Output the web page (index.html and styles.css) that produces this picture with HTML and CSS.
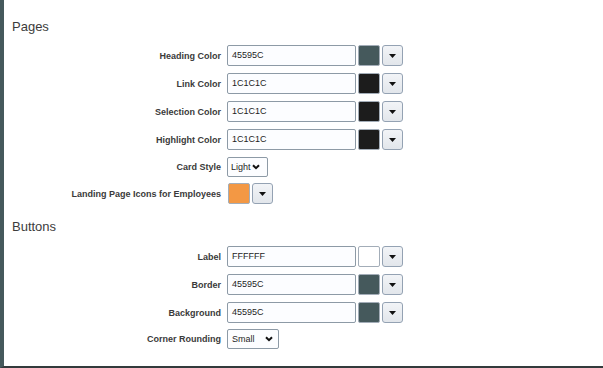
FILE: index.html
```html
<!DOCTYPE html>
<html>
<head>
<meta charset="utf-8">
<link rel="stylesheet" href="styles.css">
</head>
<body>
<div class="panel">
  <h2 class="section-title first">Pages</h2>
  <div class="rows">
    <div class="row">
      <label class="lbl">Heading Color</label>
      <div class="ctl"><span class="hex">45595C</span><span class="swatch" style="background:#45595C"></span><span class="dd"><svg width="7" height="4" viewBox="0 0 7 4"><path d="M0 0H7L3.5 4Z" fill="#111"/></svg></span></div>
    </div>
    <div class="row">
      <label class="lbl">Link Color</label>
      <div class="ctl"><span class="hex">1C1C1C</span><span class="swatch" style="background:#1C1C1C"></span><span class="dd"><svg width="7" height="4" viewBox="0 0 7 4"><path d="M0 0H7L3.5 4Z" fill="#111"/></svg></span></div>
    </div>
    <div class="row">
      <label class="lbl">Selection Color</label>
      <div class="ctl"><span class="hex">1C1C1C</span><span class="swatch" style="background:#1C1C1C"></span><span class="dd"><svg width="7" height="4" viewBox="0 0 7 4"><path d="M0 0H7L3.5 4Z" fill="#111"/></svg></span></div>
    </div>
    <div class="row">
      <label class="lbl">Highlight Color</label>
      <div class="ctl"><span class="hex">1C1C1C</span><span class="swatch" style="background:#1C1C1C"></span><span class="dd"><svg width="7" height="4" viewBox="0 0 7 4"><path d="M0 0H7L3.5 4Z" fill="#111"/></svg></span></div>
    </div>
    <div class="row row-short">
      <label class="lbl">Card Style</label>
      <div class="ctl"><span class="select sel-light">Light<svg class="chev" width="8" height="6" viewBox="0 0 8 6"><path d="M1 1.2L4 4.2L7 1.2" fill="none" stroke="#111" stroke-width="2"/></svg></span></div>
    </div>
    <div class="row row-tight">
      <label class="lbl">Landing Page Icons for Employees</label>
      <div class="ctl"><span class="swatch swatch-solo" style="background:#F39844"></span><span class="dd"><svg width="7" height="4" viewBox="0 0 7 4"><path d="M0 0H7L3.5 4Z" fill="#111"/></svg></span></div>
    </div>
  </div>

  <h2 class="section-title second">Buttons</h2>
  <div class="rows">
    <div class="row">
      <label class="lbl">Label</label>
      <div class="ctl"><span class="hex">FFFFFF</span><span class="swatch" style="background:#FFFFFF"></span><span class="dd"><svg width="7" height="4" viewBox="0 0 7 4"><path d="M0 0H7L3.5 4Z" fill="#111"/></svg></span></div>
    </div>
    <div class="row">
      <label class="lbl">Border</label>
      <div class="ctl"><span class="hex">45595C</span><span class="swatch" style="background:#45595C"></span><span class="dd"><svg width="7" height="4" viewBox="0 0 7 4"><path d="M0 0H7L3.5 4Z" fill="#111"/></svg></span></div>
    </div>
    <div class="row">
      <label class="lbl">Background</label>
      <div class="ctl"><span class="hex">45595C</span><span class="swatch" style="background:#45595C"></span><span class="dd"><svg width="7" height="4" viewBox="0 0 7 4"><path d="M0 0H7L3.5 4Z" fill="#111"/></svg></span></div>
    </div>
    <div class="row row-short row-tight">
      <label class="lbl">Corner Rounding</label>
      <div class="ctl"><span class="select sel-small">Small<svg class="chev" width="8" height="6" viewBox="0 0 8 6"><path d="M1 1.2L4 4.2L7 1.2" fill="none" stroke="#111" stroke-width="2"/></svg></span></div>
    </div>
  </div>
</div>
</body>
</html>
```

FILE: styles.css
```css
html, body {
  margin: 0;
  padding: 0;
  background: #ffffff;
}
body {
  font-family: "Liberation Sans", Arial, sans-serif;
  color: #333;
}
.panel {
  box-sizing: border-box;
  height: 368px;
  border-left: 4px solid #45595C;
  border-bottom: 2px solid #333a3c;
  display: flex;
  flex-direction: column;
}
.section-title {
  margin: 14px 0 11px 8px;
  font-size: 13px;
  line-height: 15px;
  font-weight: normal;
  color: #3c3c3c;
}
.section-title.first {
  margin-top: 19px;
}
.section-title.second {
  margin-top: 15px;
  margin-bottom: 12px;
}
.rows {
  display: flex;
  flex-direction: column;
  gap: 7px;
}
.row {
  display: flex;
  align-items: center;
  height: 21px;
}
.row-short {
  height: 20px;
}
.row-tight {
  margin-top: -1px;
}
.lbl {
  width: 223px;
  padding-right: 6px;
  box-sizing: border-box;
  text-align: right;
  font-size: 9px;
  font-weight: bold;
  color: #3a3a3a;
  flex: none;
}
.ctl {
  display: flex;
  align-items: center;
  height: 100%;
}
.hex {
  box-sizing: border-box;
  width: 129px;
  height: 21px;
  border: 1px solid #8d9aa6;
  border-radius: 2px;
  background: #fcfdff;
  font-size: 9px;
  line-height: 19px;
  padding-left: 4px;
  color: #1e1e1e;
}
.swatch {
  box-sizing: border-box;
  width: 22px;
  height: 21px;
  margin-left: 2px;
  border: 1px solid #a3adb8;
  border-radius: 2px;
}
.swatch-solo {
  margin-left: 1px;
}
.dd {
  box-sizing: border-box;
  width: 21px;
  height: 21px;
  margin-left: 2px;
  border: 1px solid #94a2b3;
  border-radius: 3px;
  background: linear-gradient(#f2f4f7, #e2e6eb);
  display: flex;
  align-items: center;
  justify-content: center;
}
.dd svg {
  display: block;
}
.select {
  box-sizing: border-box;
  height: 20px;
  border: 1px solid #8d9aa6;
  border-radius: 2px;
  background: #fcfdff;
  font-size: 9px;
  line-height: 18px;
  color: #1e1e1e;
  display: flex;
  align-items: center;
  padding-left: 4px;
}
.sel-light {
  width: 41px;
  padding-left: 3px;
  gap: 1px;
}
.sel-small {
  width: 52px;
  justify-content: space-between;
  padding-right: 5px;
}
.chev {
  display: block;
}
```
